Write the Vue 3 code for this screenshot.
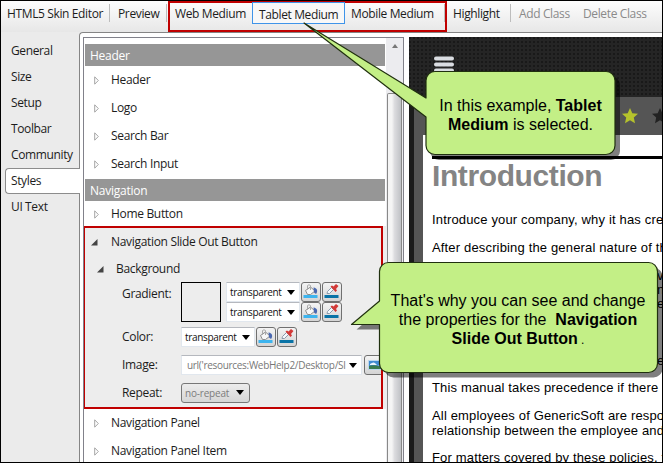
<script setup>
const side = ['General', 'Size', 'Setup', 'Toolbar', 'Community', 'Styles', 'UI Text']
</script>

<template>
  <div class="app">
    <header class="bar">
      <span class="t t1">HTML5 Skin Editor</span><i class="sep"></i>
      <span class="t t2">Preview</span><i class="sep"></i>
      <div class="mediums">
        <span class="t m1">Web Medium</span>
        <span class="t m2">Tablet Medium</span>
        <span class="t m3">Mobile Medium</span><i class="sep"></i>
      </div>
      <span class="t t3">Highlight</span><i class="sep"></i>
      <span class="t t4 off">Add Class</span>
      <span class="t t5 off">Delete Class</span>
    </header>
    <main class="main">
      <nav class="side">
        <div v-for="s in side" :key="s" class="tab" :class="{ on: s === 'Styles' }">{{ s }}</div>
      </nav>
      <section class="frame">
        <div class="tree">
          <div class="list">
            <div class="group">Header</div>
            <div v-for="n in ['Header', 'Logo', 'Search Bar', 'Search Input']" :key="n" class="row">
              <svg width="6" height="9" viewBox="0 0 6 9"><path d="M.7.8 4.3 4.5.7 8.2z" fill="#fff" stroke="#a5a5a5" /></svg>{{ n }}
            </div>
            <div class="group nav">Navigation</div>
            <div class="row home">
              <svg width="6" height="9" viewBox="0 0 6 9"><path d="M.7.8 4.3 4.5.7 8.2z" fill="#fff" stroke="#a5a5a5" /></svg>Home Button
            </div>
            <div class="open">
              <div class="box">
                <div class="orow o1"><svg width="7" height="7"><path d="M6.5 0v6.5H0z" fill="#444" /></svg>Navigation Slide Out Button</div>
                <div class="orow o2"><svg width="7" height="7"><path d="M6.5 0v6.5H0z" fill="#444" /></svg>Background</div>
                <div class="prop grad">
                  <label>Gradient:</label><i class="swatch"></i>
                  <div class="pair">
                    <div v-for="k in 2" :key="k" class="pick">
                      <span class="combo">transparent<b class="arr"></b></span>
                      <span class="btn"><svg width="16" height="16"><path d="m2.500 6.500 5-3.500 4.500 4-4.500 3.500H4.500z" fill="#f7f7f7" stroke="#8d8d8d" /><path d="M4.500 6V1.500q1.500-1.500 3 0V6" fill="none" stroke="#aaa" /><path d="M10.500 3.500c4 .5 4.500 4 2.500 6.500l-2-1.500z" fill="#4a68b0" /><path d="M.5 11h14v3H.5z" fill="#3db4ee" /></svg></span>
                      <span class="btn"><svg width="16" height="16"><path d="m3 9.500.5-2 4-4 2 2-4 4z" fill="#f4f8fc" stroke="#8b9aab" /><path d="m6.500 2.500 1.500-1 1.500 1L12 0l2.500 2-2.500 3 1 1.500-1.500 1.500z" fill="#d33a38" /><path d="M.5 11h14v3H.5z" fill="#0a73a6" /></svg></span>
                    </div>
                  </div>
                </div>
                <div class="prop color">
                  <label>Color:</label>
                  <div class="pick">
                    <span class="combo">transparent<b class="arr"></b></span>
                    <span class="btn"><svg width="16" height="16"><path d="m2.500 6.500 5-3.500 4.500 4-4.500 3.500H4.500z" fill="#f7f7f7" stroke="#8d8d8d" /><path d="M4.500 6V1.500q1.500-1.500 3 0V6" fill="none" stroke="#aaa" /><path d="M10.500 3.500c4 .5 4.500 4 2.500 6.500l-2-1.500z" fill="#4a68b0" /><path d="M.5 11h14v3H.5z" fill="#3db4ee" /></svg></span>
                    <span class="btn"><svg width="16" height="16"><path d="m3 9.500.5-2 4-4 2 2-4 4z" fill="#f4f8fc" stroke="#8b9aab" /><path d="m6.500 2.500 1.500-1 1.500 1L12 0l2.500 2-2.500 3 1 1.500-1.500 1.500z" fill="#d33a38" /><path d="M.5 11h14v3H.5z" fill="#0a73a6" /></svg></span>
                  </div>
                </div>
                <div class="prop image">
                  <label>Image:</label>
                  <span class="combo url"><em>url('resources:WebHelp2/Desktop/Sl</em><b class="arr"></b></span>
                  <span class="btn pic"><svg width="16" height="12"><path d="M.5.5h15v9H.5z" fill="#3f8bd2" stroke="#bcd7ee" /><path d="M2 4q4-3 6 0t7-1v2H2z" fill="#e9f5ff" /><path d="M1 9V6q7-2 14 2v1z" fill="#397b50" /></svg></span>
                </div>
                <div class="prop repeat">
                  <label>Repeat:</label><span class="drop">no-repeat<b class="arr"></b></span>
                </div>
              </div>
            </div>
            <div v-for="n in ['Navigation Panel', 'Navigation Panel Item']" :key="n" class="row">
              <svg width="6" height="9" viewBox="0 0 6 9"><path d="M.7.8 4.3 4.5.7 8.2z" fill="#fff" stroke="#a5a5a5" /></svg>{{ n }}
            </div>
          </div>
          <div class="scroll"><b></b><i></i></div>
        </div>
        <div class="preview">
          <div class="dark">
            <svg width="22" height="18"><path d="M2 2.500h16M2 8.500h16M2 14.500h16" stroke="#dadde2" stroke-width="4" stroke-linecap="round" /></svg>
          </div>
          <div class="stars">
            <svg width="50" height="18"><path d="m9 1 2.300 5.200 5.700.6-4.200 3.800 1.200 5.600L9 13.300l-5 2.900 1.200-5.600L1 6.800l5.700-.6z" fill="#b5c22c" /><path transform="translate(30)" d="m9 1 2.300 5.200 5.700.6-4.200 3.800 1.200 5.600L9 13.300l-5 2.900 1.200-5.600L1 6.800l5.700-.6z" fill="#222" /></svg>
          </div>
          <article class="doc">
            <h1>Introduction</h1>
            <p class="p1">Introduce your company, why it has created</p>
            <p class="p2">After describing the general nature of the</p>
            <div class="tail"><span>v</span><span>n</span><span>e</span><span class="last">e</span></div>
            <p class="p3">This manual takes precedence if there</p>
            <p class="p4">All employees of GenericSoft are responsible<br />relationship between the employee and</p>
            <p class="p5">For matters covered by these policies, the</p>
          </article>
        </div>
      </section>
    </main>
    <svg class="shapes" width="663" height="463">
      <g stroke-linejoin="round">
        <rect class="shade" x="430" y="76" width="190" height="84" rx="9" />
        <path class="leaf" d="M435 71.500h171a9 9 0 0 1 9 9v65a9 9 0 0 1-9 9H435a9 9 0 0 1-9-9V117L304 23l122 75V80.500a9 9 0 0 1 9-9z" />
        <path class="shade" transform="translate(5 5)" d="M388.500 262.500h260a9 9 0 0 1 9 9v92a9 9 0 0 1-9 9h-260a9 9 0 0 1-9-9V324.500H351.500l28-23.500V271.500a9 9 0 0 1 9-9z" />
        <path class="leaf" d="M388.500 262.500h260a9 9 0 0 1 9 9v92a9 9 0 0 1-9 9h-260a9 9 0 0 1-9-9V324.500H351.500l28-23.500V271.500a9 9 0 0 1 9-9z" />
      </g>
    </svg>
    <div class="note n1"><p>In this example, <strong>Tablet</strong></p><p><strong>Medium</strong> is selected.</p></div>
    <div class="note n2"><p>That's why you can see and change</p><p>the properties for the &nbsp;<strong>Navigation</strong></p><p><strong>Slide Out Button</strong><small> .</small></p></div>
  </div>
</template>

<style>
body { background: #fff; }
</style>
<style scoped>
* { box-sizing: border-box; margin: 0; padding: 0; }
svg { display: block; flex: none; }
.app { position: relative; width: 663px; height: 463px; overflow: hidden; border: 1px solid #000; background: #ebebeb; font: 12px/16px "Open Sans", "Noto Sans", sans-serif; color: #1c1c1c; display: flex; flex-direction: column; }
.bar { height: 31px; flex: none; display: flex; background: linear-gradient(#fdfdfd, #e7e7e7); padding-left: 6px; white-space: nowrap; }
.t { height: 26px; line-height: 26px; flex: none; letter-spacing: -.37px; }
.sep { width: 1px; height: 18px; margin-top: 3px; background: #bdbdbd; flex: none; }
.t1 { width: 102px; }
.t2 { width: 56px; padding-left: 8px; }
.mediums { display: flex; width: 279px; height: 31px; border: 2px solid #c00000; margin-left: 1px; flex: none; }
.mediums .t { margin-top: -2px; }
.m1 { width: 82px; padding-left: 5px; }
.mediums .m2 { width: 93px; height: 22px; margin-top: -1px; line-height: 23px; border: 1px solid #3f94e9; padding-left: 6px; background: #f8f8f8; }
.m3 { width: 99px; padding-left: 6px; }
.mediums .sep { margin-top: 1px; }
.t3 { width: 63px; padding-left: 6px; }
.t4 { width: 72px; padding-left: 8px; }
.off { color: #8a8a8a; }
.main { flex: 1; display: flex; min-height: 0; }
.side { width: 79px; flex: none; padding-top: 6px; z-index: 1; }
.tab { height: 26px; line-height: 25px; padding-left: 10px; letter-spacing: -.37px; }
.tab.on { background: #fff; border: 1px solid #8c8c8c; border-right: 0; border-radius: 4px 0 0 4px; margin-left: 4px; padding-left: 5px; line-height: 24px; }
.frame { flex: 1; margin-left: -1px; min-width: 0; border: 1px solid #858585; border-right: 0; border-bottom: 0; border-radius: 4px 0 0; background: #fff; display: flex; padding: 4px 0 0 3px; }
.tree { width: 321px; flex: none; border: 1px solid #81818a; border-bottom: 0; display: flex; overflow: hidden; }
.list { width: 302px; flex: none; padding-top: 6px; }
.group { height: 22px; margin: 0 1px 0 1px; background: #969696; color: #fff; line-height: 23px; padding-left: 5px; letter-spacing: -.25px; }
.row { height: 28px; display: flex; align-items: center; padding-left: 10px; letter-spacing: -.32px; }
.row svg { margin-right: 11px; }
.group.nav { margin-top: 1px; }
.home { height: 25px; padding-top: 1px; }
.open { height: 183px; background: #ededed; margin-left: -1px; }
.box { width: 300px; height: 183px; border: 2px solid #c00000; }
.orow { display: flex; align-items: center; height: 28px; letter-spacing: -.32px; }
.orow svg { margin-right: 13px; }
.o1 { padding-left: 6px; }
.o2 { padding-left: 12px; height: 26px; }
.o2 svg { margin-right: 12px; }
.prop { display: flex; padding-left: 37px; }
.prop label { width: 59px; flex: none; letter-spacing: -.32px; }
.grad { height: 43px; }
.grad label { padding-top: 4px; }
.swatch { width: 40px; height: 40px; border: 1px solid #000; margin-right: 5px; flex: none; }
.pick { display: flex; gap: 1px; height: 20px; }
.pair { height: 41px; }
.combo { width: 74px; height: 20px; background: #fff; border: 1px solid #e1e7ee; border-top-color: #b5b8be; font-size: 10px; letter-spacing: -.34px; line-height: 17px; padding: 0 4px 0 3px; display: flex; justify-content: space-between; align-items: center; color: #111; }
.arr { width: 0; height: 0; border: 4px solid transparent; border-top: 5px solid #000; border-bottom: 0; flex: none; }
.btn { width: 20px; height: 20px; border: 1px solid #707070; border-radius: 3px; background: linear-gradient(#f4f4f4, #d4d4d4); padding: 1px; flex: none; }
.color { height: 26px; padding-top: 2px; }
.color label { padding-top: 2px; }
.image { height: 28px; align-items: center; overflow: hidden; }
.url { width: 181px; color: #777; flex: none; padding-left: 5px; }
.url em { font-style: normal; width: 162px; overflow: hidden; white-space: nowrap; letter-spacing: -.3px; }
.pic { width: 26px; margin-left: 2px; padding: 4px 3px; }
.repeat { height: 27px; align-items: center; }
.drop { width: 69px; height: 20px; border: 1px solid #777; border-radius: 3px; background: linear-gradient(#ececec, #d6d6d6); display: flex; align-items: center; justify-content: space-between; padding: 0 5px 0 3px; font-size: 10px; letter-spacing: -.2px; color: #7c7c7c; }
.scroll { width: 17px; background: #ececef; display: flex; flex-direction: column; align-items: center; }
.scroll b { border: 3.5px solid transparent; border-top: 0; border-bottom: 4px solid #777; margin-top: 6px; width: 0; height: 0; }
.scroll i { margin-top: 45px; flex: 1; width: 15px; border: 1px solid #888; border-bottom: 0; border-radius: 2px 2px 0 0; background: linear-gradient(90deg, #f5f5f5 30%, #dcdcdf 50%, #bfc1c5); }
.preview { flex: 1; min-width: 0; margin-left: 5px; background: linear-gradient(90deg, #1b1b1b 5px, #555 5px); display: flex; flex-direction: column; }
.dark { height: 60px; flex: none; padding: 19px 0 0 25px; background: radial-gradient(circle at 1px 1px, #191919 1px, transparent 1.300px) 0 0 / 4px 4px, #252525; }
.stars { height: 38px; flex: none; padding: 10px 0 0 212px; overflow: hidden; }
.doc { flex: 1; min-height: 0; overflow: hidden; background: #fff; margin-left: 14px; padding: 21px 0 0 9px; font: 13px/15px "Liberation Sans", Arial, sans-serif; letter-spacing: .16px; color: #000; white-space: nowrap; }
h1 { border-top: 3px solid #000; font-size: 30px; line-height: 34px; letter-spacing: -.4px; color: #848484; height: 56px; }
.p1, .p2 { height: 28px; }
.tail { height: 112px; padding-left: 225px; display: flex; flex-direction: column; }
.tail span { height: 14px; }
.tail .last { margin-top: 43px; }
.p3 { height: 28px; }
.p4 { height: 42px; }
.shapes { position: absolute; left: -1px; top: -1px; }
.leaf { fill: #c3ef86; stroke: #20300f; stroke-width: 1.200; }
.shade { fill: rgba(0, 0, 0, .5); }
.note { position: absolute; text-align: center; font: 16px/19px "Liberation Sans", Arial, sans-serif; color: #000; white-space: nowrap; }
.n1 { left: 425px; top: 95px; width: 189px; }
.n2 { left: 378px; top: 290px; width: 278px; }
small { font-size: 12px; }
</style>
